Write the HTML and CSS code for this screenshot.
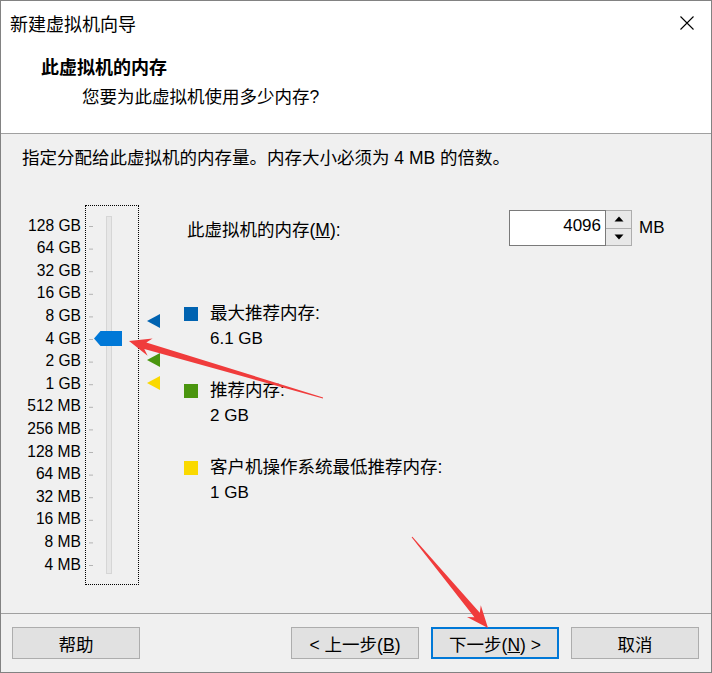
FILE: index.html
```html
<!DOCTYPE html>
<html lang="zh-CN">
<head>
<meta charset="utf-8">
<title>新建虚拟机向导</title>
<link rel="stylesheet" href="styles.css">
</head>
<body>
<div class="window">
  <div class="header">
    <div class="titlebar">
      <span class="title">新建虚拟机向导</span>
      <svg class="close" width="16" height="16" viewBox="0 0 16 16"><path d="M1.5 1.5 L14.5 14.5 M14.5 1.5 L1.5 14.5" stroke="#000" stroke-width="1.1" fill="none"/></svg>
    </div>
    <div class="head-title">此虚拟机的内存</div>
    <div class="head-sub">您要为此虚拟机使用多少内存?</div>
  </div>

  <div class="body">
    <div class="intro">指定分配给此虚拟机的内存量。内存大小必须为 4 MB 的倍数。</div>
    <div class="main">
      <div class="scale">
        <div class="lbl">128 GB</div>
        <div class="lbl">64 GB</div>
        <div class="lbl">32 GB</div>
        <div class="lbl">16 GB</div>
        <div class="lbl">8 GB</div>
        <div class="lbl">4 GB</div>
        <div class="lbl">2 GB</div>
        <div class="lbl">1 GB</div>
        <div class="lbl">512 MB</div>
        <div class="lbl">256 MB</div>
        <div class="lbl">128 MB</div>
        <div class="lbl">64 MB</div>
        <div class="lbl">32 MB</div>
        <div class="lbl">16 MB</div>
        <div class="lbl">8 MB</div>
        <div class="lbl">4 MB</div>
      </div>
      <div class="slider">
        <svg width="52" height="378" viewBox="0 0 52 378">
          <g fill="#b4b4b4">
            <rect x="3" y="20" width="4" height="1"/>
            <rect x="3" y="42.6" width="4" height="1"/>
            <rect x="3" y="65.2" width="4" height="1"/>
            <rect x="3" y="87.8" width="4" height="1"/>
            <rect x="3" y="110.4" width="4" height="1"/>
            <rect x="3" y="133" width="4" height="1"/>
            <rect x="3" y="155.6" width="4" height="1"/>
            <rect x="3" y="178.2" width="4" height="1"/>
            <rect x="3" y="200.8" width="4" height="1"/>
            <rect x="3" y="223.4" width="4" height="1"/>
            <rect x="3" y="246" width="4" height="1"/>
            <rect x="3" y="268.6" width="4" height="1"/>
            <rect x="3" y="291.2" width="4" height="1"/>
            <rect x="3" y="313.8" width="4" height="1"/>
            <rect x="3" y="336.4" width="4" height="1"/>
            <rect x="3" y="359" width="4" height="1"/>
          </g>
          <rect x="20.5" y="10.5" width="5" height="357" fill="#e7e7e7" stroke="#d6d6d6"/>
          <polygon points="8,132.5 14.5,125 36,125 36,140 14.5,140" fill="#0078d7"/>
        </svg>
      </div>
      <svg class="markers" width="14" height="380" viewBox="0 0 14 380">
        <polygon points="0,116 13,109 13,123" fill="#0063b1"/>
        <polygon points="0,155 13,148 13,162" fill="#4a950e"/>
        <polygon points="0,178 13,171 13,185" fill="#fad900"/>
      </svg>
      <div class="panel">
        <div class="row">
          <div class="field-label">此虚拟机的内存(<u>M</u>):</div>
          <div class="numbox">
            <div class="numfield">4096</div>
            <div class="spin">
              <div class="spin-btn"><svg width="10" height="6" viewBox="0 0 10 6"><polygon points="5,0.5 9.5,5.5 0.5,5.5" fill="#000"/></svg></div>
              <div class="spin-btn"><svg width="10" height="6" viewBox="0 0 10 6"><polygon points="0.5,0.5 9.5,0.5 5,5.5" fill="#000"/></svg></div>
            </div>
          </div>
          <div class="unit">MB</div>
        </div>
        <div class="legend">
          <div class="item">
            <span class="sq sq-blue"></span>
            <div class="item-text">
              <div class="item-name">最大推荐内存:</div>
              <div class="item-val">6.1 GB</div>
            </div>
          </div>
          <div class="item">
            <span class="sq sq-green"></span>
            <div class="item-text">
              <div class="item-name">推荐内存:</div>
              <div class="item-val">2 GB</div>
            </div>
          </div>
          <div class="item">
            <span class="sq sq-yellow"></span>
            <div class="item-text">
              <div class="item-name">客户机操作系统最低推荐内存:</div>
              <div class="item-val">1 GB</div>
            </div>
          </div>
        </div>
      </div>
    </div>
  </div>

  <div class="footer">
    <button class="btn">帮助</button>
    <div class="spacer"></div>
    <button class="btn">&lt; 上一步(<u>B</u>)</button>
    <button class="btn btn-focus">下一步(<u>N</u>) &gt;</button>
    <button class="btn">取消</button>
  </div>

  <svg class="annot" width="712" height="673" viewBox="0 0 712 673">
    <polygon points="129,341 152.6,338.6 146.3,342.4 323.1,397.5 322.9,398.5 144.3,349.1 147.6,355.8" fill="#f03c3c"/>
    <polygon points="488,628 467,616.9 474.4,617.2 411.6,537.3 412.4,536.7 479.8,612.7 480.8,605.3" fill="#f03c3c"/>
  </svg>
</div>
</body>
</html>
```
FILE: styles.css
```css
html, body {
  margin: 0;
  padding: 0;
}
body {
  width: 712px;
  height: 673px;
  background: #f0f0f0;
  font-family: "Liberation Sans", "Noto Sans CJK SC", sans-serif;
  font-size: 17.5px;
  color: #000;
}
.window {
  position: relative;
  width: 712px;
  height: 673px;
  box-sizing: border-box;
  border: 1px solid #828282;
  background: #f0f0f0;
  display: flex;
  flex-direction: column;
}
.header {
  height: 132px;
  flex: none;
  background: #fff;
  border-bottom: 1px solid #a0a0a0;
}
.titlebar {
  height: 43px;
  display: flex;
  align-items: center;
  padding-left: 9px;
}
.title {
  flex: 1;
  font-size: 18px;
  font-family: "Noto Sans CJK SC", sans-serif;
}
.close {
  margin-right: 16px;
}
.head-title {
  margin-top: 12px;
  padding-left: 40px;
  line-height: 24px;
  font-weight: bold;
  font-size: 18px;
}
.head-sub {
  margin-top: 5px;
  padding-left: 81px;
  line-height: 24px;
}
.body {
  height: 479px;
  flex: none;
}
.intro {
  padding-top: 12px;
  padding-left: 21px;
  line-height: 24px;
}
.main {
  margin-top: 35px;
  display: flex;
  align-items: flex-start;
}
.scale {
  width: 80px;
  padding-top: 9.7px;
  text-align: right;
  font-size: 15.6px;
}
.lbl {
  height: 22.6px;
  line-height: 22.6px;
  white-space: nowrap;
}
.slider {
  margin-left: 4px;
  width: 54px;
  height: 380px;
  box-sizing: border-box;
  border: 1px dotted #000;
}
.slider svg {
  display: block;
}
.markers {
  display: block;
  margin-left: 8px;
}
.panel {
  margin-left: 23px;
}
.row {
  margin-top: 5px;
  height: 36px;
  display: flex;
  align-items: center;
}
.field-label {
  width: 322px;
  padding-left: 3px;
  white-space: nowrap;
}
.numbox {
  display: flex;
  height: 36px;
}
.numfield {
  width: 97px;
  height: 36px;
  box-sizing: border-box;
  border: 1px solid #7a7a7a;
  background: #fff;
  text-align: right;
  padding-right: 4px;
  line-height: 30px;
  font-size: 17px;
}
.spin {
  width: 26px;
  height: 36px;
  box-sizing: border-box;
  border: 1px solid #adadad;
  border-left: none;
  display: flex;
  flex-direction: column;
}
.spin-btn {
  flex: 1;
  background: #e8e8e8;
  display: flex;
  align-items: center;
  justify-content: center;
}
.spin-btn + .spin-btn {
  border-top: 1px solid #adadad;
}
.spin-btn svg {
  display: block;
}
.unit {
  margin-left: 7px;
  font-size: 17px;
}
.legend {
  margin-top: 55px;
  display: flex;
  flex-direction: column;
  gap: 27px;
}
.item {
  display: flex;
  align-items: flex-start;
}
.sq {
  width: 14px;
  height: 14px;
  margin-top: 6px;
  flex: none;
}
.sq-blue { background: #0063b1; }
.sq-green { background: #4a950e; }
.sq-yellow { background: #fad900; }
.item-text {
  margin-left: 12px;
  line-height: 25px;
}
.item-val {
  font-size: 17px;
}
.footer {
  flex: none;
  border-top: 1px solid #a0a0a0;
  padding: 13px 12px 0 11px;
  display: flex;
}
.spacer {
  flex: 1;
}
.btn {
  width: 128px;
  height: 32px;
  box-sizing: border-box;
  margin: 0;
  padding: 0;
  background: #e1e1e1;
  border: 1px solid #adadad;
  font-family: "Liberation Sans", "Noto Sans CJK SC", sans-serif;
  font-size: 17.5px;
  color: #000;
}
.btn + .btn {
  margin-left: 12px;
}
.btn-focus {
  border: 2px solid #0078d7;
}
.annot {
  position: absolute;
  left: -1px;
  top: -1px;
  pointer-events: none;
}
```
